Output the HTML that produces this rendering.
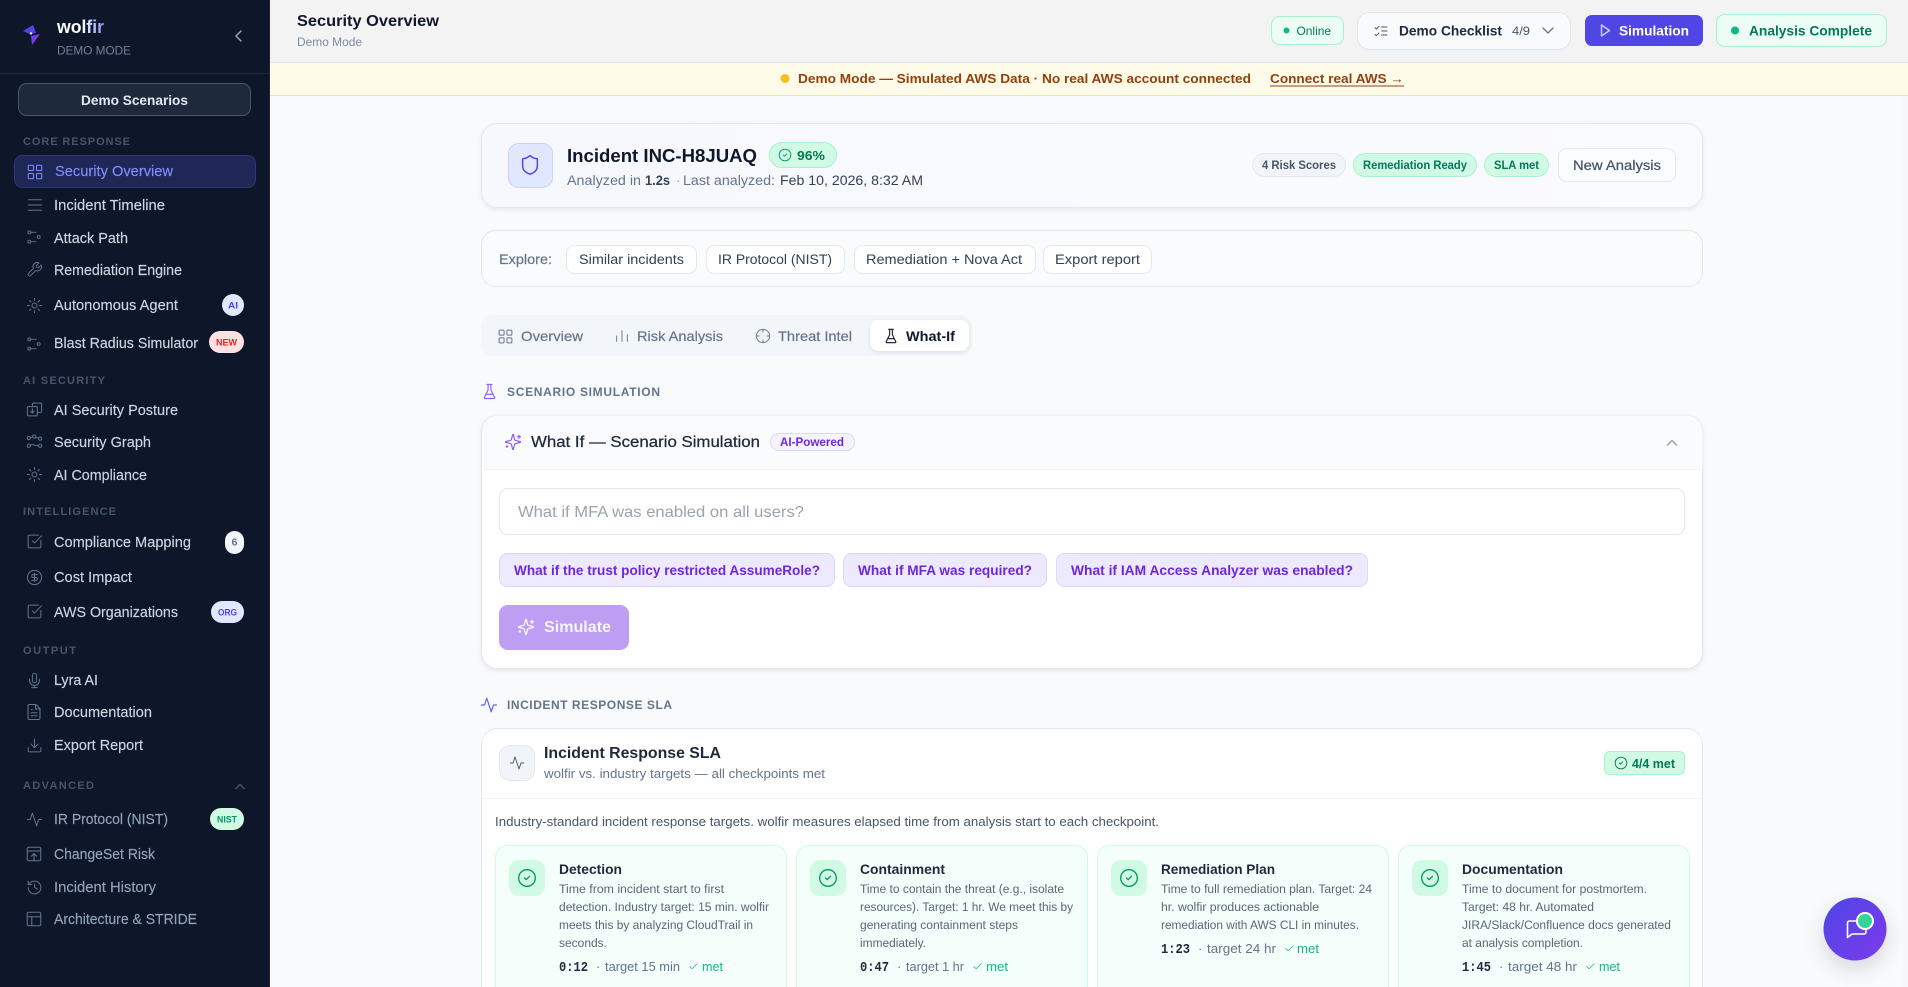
<!DOCTYPE html>
<html lang="en"><head><meta charset="utf-8"><title>wolfir - Security Overview</title>
<style>
html,body{margin:0;padding:0;width:1908px;height:987px;overflow:hidden;background:#f9fafc}
svg{display:block}
text{font-family:"Liberation Sans",Arial,sans-serif;white-space:pre}
.b{font-weight:700}
.n{font-size:14.5px;fill:#cbd5e1;stroke:#cbd5e1;stroke-width:.15px}
.d{font-size:14.5px;fill:#94a3b8;stroke:#94a3b8;stroke-width:.15px}
.s{font-size:11px;font-weight:700;fill:#475569}
.l{font-size:12px;font-weight:700;fill:#64748b}
.g{font-size:12.2px;fill:#5b6678}
.f{font-size:13px;fill:#64748b}
.m{font-family:"Liberation Mono",monospace;font-size:13.5px;font-weight:700;fill:#1e293b}
.ok{font-size:13px;fill:#10b981}
.t{font-size:14px;font-weight:700;fill:#1e293b}
.i{fill:none;stroke-width:1.6;stroke-linecap:round;stroke-linejoin:round}
.j{fill:none;stroke-width:1.4;stroke-linecap:round;stroke-linejoin:round}
</style></head><body>
<svg xmlns="http://www.w3.org/2000/svg" width="1908" height="987" viewBox="0 0 1908 987">
<defs>
<linearGradient id="wg" gradientUnits="userSpaceOnUse" x1="82" y1="0" x2="104" y2="0"><stop offset="0" stop-color="#fff"/><stop offset="1" stop-color="#818cf8"/></linearGradient>
<linearGradient id="fab" x1="0" y1="0" x2="1" y2="1"><stop offset="0" stop-color="#4f46e5"/><stop offset="1" stop-color="#7c3aed"/></linearGradient>
<linearGradient id="hc" x1="0" y1="0" x2="1" y2="0"><stop offset="0" stop-color="#f6f8fe"/><stop offset="1" stop-color="#fafbfe"/></linearGradient>
<filter id="sh" x="-5%" y="-20%" width="110%" height="150%"><feDropShadow dx="0" dy="1.5" stdDeviation="2.5" flood-color="#0f172a" flood-opacity=".08"/></filter>
<filter id="sh2" x="-40%" y="-40%" width="180%" height="190%"><feDropShadow dx="0" dy="8" stdDeviation="10" flood-color="#0f172a" flood-opacity=".14"/></filter>
<symbol id="grid" viewBox="0 0 24 24"><rect x="3" y="3" width="7" height="7" rx="1"/><rect x="14" y="3" width="7" height="7" rx="1"/><rect x="14" y="14" width="7" height="7" rx="1"/><rect x="3" y="14" width="7" height="7" rx="1"/></symbol>
<symbol id="lines" viewBox="0 0 24 24"><path d="M3 5h18M3 12h18M3 19h18"/></symbol>
<symbol id="path" viewBox="0 0 24 24"><circle cx="5" cy="5" r="2.2"/><circle cx="19" cy="12" r="2.2"/><circle cx="5" cy="19" r="2.2"/><path d="M7.5 5H15M7.5 19H15"/></symbol>
<symbol id="wrench" viewBox="0 0 24 24"><path d="M14.7 6.3a1 1 0 0 0 0 1.4l1.6 1.6a1 1 0 0 0 1.4 0l3.77-3.77a6 6 0 0 1-7.94 7.94l-6.91 6.91a2.12 2.12 0 0 1-3-3l6.91-6.91a6 6 0 0 1 7.94-7.94l-3.76 3.76z"/></symbol>
<symbol id="sun" viewBox="0 0 24 24"><circle cx="12" cy="12" r="3.5"/><path d="M12 2v3M12 19v3M4.9 4.9l2 2M17.1 17.1l2 2M2 12h3M19 12h3M4.9 19.1l2-2M17.1 6.9l2-2"/></symbol>
<symbol id="posture" viewBox="0 0 24 24"><rect x="2" y="8" width="14" height="13" rx="1.5"/><path d="M9 8V4a1 1 0 0 1 1-1h11a1 1 0 0 1 1 1v11a1 1 0 0 1-1 1h-5M9 11v6M6.5 14.5 9 17l2.5-2.5"/></symbol>
<symbol id="graph" viewBox="0 0 24 24"><circle cx="4" cy="7" r="2.3"/><circle cx="11.5" cy="5" r="2.3"/><circle cx="20" cy="8" r="2.3"/><circle cx="4" cy="18" r="2.3"/><circle cx="20" cy="18" r="2.3"/><path d="M6.3 6.5l3-1M13.7 6l4 1.3M6.3 17.5q3-2 6-.5t5.4.5"/></symbol>
<symbol id="check2" viewBox="0 0 24 24"><path d="M21 10.5V19a2 2 0 0 1-2 2H5a2 2 0 0 1-2-2V5a2 2 0 0 1 2-2h12.5"/><path d="m9 11 3 3L22 4"/></symbol>
<symbol id="dollar" viewBox="0 0 24 24"><circle cx="12" cy="12" r="10"/><path d="M16 8h-6a2 2 0 1 0 0 4h4a2 2 0 1 1 0 4H8M12 18V6"/></symbol>
<symbol id="mic" viewBox="0 0 24 24"><path d="M12 2a3 3 0 0 0-3 3v7a3 3 0 0 0 6 0V5a3 3 0 0 0-3-3Z"/><path d="M19 10v2a7 7 0 0 1-14 0v-2M12 19v3M8 22h8"/></symbol>
<symbol id="file" viewBox="0 0 24 24"><path d="M14.5 2H6a2 2 0 0 0-2 2v16a2 2 0 0 0 2 2h12a2 2 0 0 0 2-2V7.5L14.5 2z"/><path d="M14 2v6h6M16 13H8M16 17H8M10 9H8"/></symbol>
<symbol id="dl" viewBox="0 0 24 24"><path d="M21 15v4a2 2 0 0 1-2 2H5a2 2 0 0 1-2-2v-4M7 10l5 5 5-5M12 15V3"/></symbol>
<symbol id="act" viewBox="0 0 24 24"><path d="M22 12h-4l-3 9L9 3l-3 9H2"/></symbol>
<symbol id="cset" viewBox="0 0 24 24"><rect x="3" y="3" width="18" height="18" rx="2"/><path d="M3 8h18M12 21v-9M8.5 15l3.5-3.500 3.500 3.500"/></symbol>
<symbol id="hist" viewBox="0 0 24 24"><path d="M3 12a9 9 0 1 0 9-9 9.75 9.75 0 0 0-6.74 2.74L3 8M3 3v5h5M12 7v5l4 2"/></symbol>
<symbol id="layout" viewBox="0 0 24 24"><rect x="3" y="3" width="18" height="18" rx="2"/><path d="M3 9h18M9 21V9"/></symbol>
<symbol id="listc" viewBox="0 0 24 24"><path d="m3 17 2 2 4-4M3 7l2 2 4-4M13 6h8M13 12h8M13 18h8"/></symbol>
<symbol id="shield" viewBox="0 0 24 24"><path d="M20 13c0 5-3.500 7.500-7.660 8.950a1 1 0 0 1-.67-.01C7.500 20.500 4 18 4 13V6a1 1 0 0 1 1-1c2 0 4.500-1.200 6.240-2.720a1.170 1.170 0 0 1 1.520 0C14.510 3.810 17 5 19 5a1 1 0 0 1 1 1z"/></symbol>
<symbol id="cc" viewBox="0 0 24 24"><circle cx="12" cy="12" r="10"/><path d="m9 12 2 2 4-4"/></symbol>
<symbol id="bars" viewBox="0 0 24 24"><path d="M12 20V4M20 20V10M4 20v-8"/></symbol>
<symbol id="cross" viewBox="0 0 24 24"><circle cx="12" cy="12" r="10"/><path d="M22 12h-4M6 12H2M12 6V2M12 22v-4"/></symbol>
<symbol id="flask" viewBox="0 0 24 24"><path d="M10 2v7.527a2 2 0 0 1-.211.896L4.720 20.550a1 1 0 0 0 .9 1.450h12.760a1 1 0 0 0 .9-1.450l-5.069-10.127A2 2 0 0 1 14 9.527V2M8.500 2h7M7 16h10"/></symbol>
<symbol id="spark" viewBox="0 0 24 24"><path d="M9.937 15.500A2 2 0 0 0 8.500 14.063l-6.135-1.582a.5.5 0 0 1 0-.962L8.500 9.936A2 2 0 0 0 9.937 8.500l1.582-6.135a.5.5 0 0 1 .963 0L14.063 8.500A2 2 0 0 0 15.500 9.937l6.135 1.581a.5.5 0 0 1 0 .964L15.500 14.063a2 2 0 0 0-1.437 1.437l-1.582 6.135a.5.5 0 0 1-.963 0zM20 3v4M22 5h-4M4 17v2M5 18H3"/></symbol>
<symbol id="tick" viewBox="0 0 24 24"><path d="M20 6 9 17l-5-5"/></symbol>
</defs>

<rect width="1908" height="987" fill="#f9fafc"/>
<rect x="1903" y="96" width="5" height="891" fill="#f7f7f9"/>

<!-- Sidebar -->
<rect width="270" height="987" fill="#0e172a"/><rect x="269" width="1" height="987" fill="#1b2537"/>
<polygon points="23,31 33,25 36,33 30,34" fill="#4f46e5"/><polygon points="31,36 40,34 32,45" fill="#7c3aed"/><circle cx="31" cy="33.500" r="1.200" fill="#e2e8f0"/>
<text x="57" y="33" font-size="18.500" class="b" fill="url(#wg)" textLength="47" lengthAdjust="spacingAndGlyphs">wolfir</text>
<text x="57" y="54.500" font-size="11.500" fill="#718096" textLength="74" lengthAdjust="spacingAndGlyphs">DEMO MODE</text>
<path d="M241 31l-5 5 5 5" fill="none" stroke="#94a3b8" stroke-width="1.500" stroke-linecap="round" stroke-linejoin="round"/>
<rect y="73" width="269" height="1" fill="#1e293b"/>
<rect x="18.500" y="83.500" width="232" height="32" rx="8" fill="#1e293b" stroke="#475569"/>
<text x="81" y="105" font-size="14" class="b" fill="#e2e8f0" textLength="107" lengthAdjust="spacingAndGlyphs">Demo Scenarios</text>

<text x="23" y="145" class="s" textLength="107">CORE RESPONSE</text>
<rect x="14.500" y="155.500" width="241" height="32" rx="8" fill="#1f2757" stroke="#2e3674"/>
<use href="#grid" x="26" y="163" width="18" height="18" class="j" stroke="#818cf8"/>
<text x="55" y="176" class="n" style="fill:#818cf8;stroke:#818cf8" textLength="118" lengthAdjust="spacingAndGlyphs">Security Overview</text>
<use href="#lines" x="26" y="196" width="18" height="18" class="j" stroke="#64748b"/>
<text x="54" y="210" class="n" textLength="111" lengthAdjust="spacingAndGlyphs">Incident Timeline</text>
<use href="#path" x="26" y="229" width="16" height="16" class="j" stroke="#64748b"/>
<text x="54" y="243" class="n" textLength="74" lengthAdjust="spacingAndGlyphs">Attack Path</text>
<use href="#wrench" x="26" y="261" width="17" height="17" class="j" stroke="#64748b"/>
<text x="54" y="275" class="n" textLength="128" lengthAdjust="spacingAndGlyphs">Remediation Engine</text>
<use href="#sun" x="26" y="297" width="17" height="17" class="j" stroke="#64748b"/>
<text x="54" y="310" class="n" textLength="124" lengthAdjust="spacingAndGlyphs">Autonomous Agent</text>
<circle cx="233" cy="305" r="11" fill="#e0e7ff"/><text x="228" y="308.500" font-size="9.500" class="b" fill="#4f46e5" textLength="10" lengthAdjust="spacingAndGlyphs">AI</text>
<use href="#path" x="26" y="336" width="16" height="16" class="j" stroke="#64748b"/>
<text x="54" y="348" class="n" textLength="144" lengthAdjust="spacingAndGlyphs">Blast Radius Simulator</text>
<rect x="209" y="331" width="35" height="22" rx="11" fill="#fee2e2"/><text x="216" y="345.500" font-size="9.500" class="b" fill="#dc2626" textLength="21" lengthAdjust="spacingAndGlyphs">NEW</text>

<text x="23" y="384" class="s" textLength="82">AI SECURITY</text>
<use href="#posture" x="26" y="401" width="17" height="17" class="j" stroke="#64748b"/>
<text x="54" y="415" class="n" textLength="124" lengthAdjust="spacingAndGlyphs">AI Security Posture</text>
<use href="#graph" x="26" y="433" width="17" height="17" class="j" stroke="#64748b"/>
<text x="54" y="447" class="n" textLength="97" lengthAdjust="spacingAndGlyphs">Security Graph</text>
<use href="#sun" x="26" y="466" width="17" height="17" class="j" stroke="#64748b"/>
<text x="54" y="480" class="n" textLength="93" lengthAdjust="spacingAndGlyphs">AI Compliance</text>

<text x="23" y="515" class="s" textLength="93">INTELLIGENCE</text>
<use href="#check2" x="26" y="533" width="17" height="17" class="j" stroke="#64748b"/>
<text x="54" y="547" class="n" textLength="137" lengthAdjust="spacingAndGlyphs">Compliance Mapping</text>
<rect x="225" y="531" width="19" height="23" rx="9.500" fill="#f1f5f9"/><text x="231.500" y="545.500" font-size="10" class="b" fill="#64748b" textLength="6" lengthAdjust="spacingAndGlyphs">6</text>
<use href="#dollar" x="26" y="569" width="17" height="17" class="j" stroke="#64748b"/>
<text x="54" y="582" class="n" textLength="78" lengthAdjust="spacingAndGlyphs">Cost Impact</text>
<use href="#check2" x="26" y="603" width="17" height="17" class="j" stroke="#64748b"/>
<text x="54" y="617" class="n" textLength="124" lengthAdjust="spacingAndGlyphs">AWS Organizations</text>
<rect x="211" y="601" width="33" height="22" rx="11" fill="#e0e7ff"/><text x="218" y="615.500" font-size="9.500" class="b" fill="#4f46e5" textLength="19" lengthAdjust="spacingAndGlyphs">ORG</text>

<text x="23" y="654" class="s" textLength="53">OUTPUT</text>
<use href="#mic" x="26" y="672" width="17" height="17" class="j" stroke="#64748b"/>
<text x="54" y="685" class="n" textLength="44" lengthAdjust="spacingAndGlyphs">Lyra AI</text>
<use href="#file" x="25" y="703" width="18" height="18" class="j" stroke="#64748b"/>
<text x="54" y="717" class="n" textLength="98" lengthAdjust="spacingAndGlyphs">Documentation</text>
<use href="#dl" x="26" y="737" width="17" height="17" class="j" stroke="#64748b"/>
<text x="54" y="750" class="n" textLength="89" lengthAdjust="spacingAndGlyphs">Export Report</text>

<text x="23" y="789" class="s" textLength="71">ADVANCED</text>
<path d="M236 788.500l4-4 4 4" fill="none" stroke="#475569" stroke-width="1.500" stroke-linecap="round" stroke-linejoin="round"/>
<use href="#act" x="26" y="811" width="17" height="17" class="j" stroke="#64748b"/>
<text x="54" y="824" class="d" textLength="114" lengthAdjust="spacingAndGlyphs">IR Protocol (NIST)</text>
<rect x="210" y="808" width="34" height="22" rx="11" fill="#d1fae5"/><text x="217" y="822.500" font-size="9.500" class="b" fill="#059669" textLength="20" lengthAdjust="spacingAndGlyphs">NIST</text>
<use href="#cset" x="25" y="845" width="18" height="18" class="j" stroke="#64748b"/>
<text x="54" y="859" class="d" textLength="101" lengthAdjust="spacingAndGlyphs">ChangeSet Risk</text>
<use href="#hist" x="26" y="879" width="17" height="17" class="j" stroke="#64748b"/>
<text x="54" y="892" class="d" textLength="102" lengthAdjust="spacingAndGlyphs">Incident History</text>
<use href="#layout" x="25" y="910" width="18" height="18" class="j" stroke="#64748b"/>
<text x="54" y="924" class="d" textLength="143" lengthAdjust="spacingAndGlyphs">Architecture &amp; STRIDE</text>

<!-- Header -->
<rect x="270" width="1638" height="62" fill="#f3f3f4"/><rect x="270" y="62" width="1638" height="1" fill="#e2e8f0"/>
<text x="297" y="26" font-size="16" class="b" fill="#0f172a" textLength="142" lengthAdjust="spacingAndGlyphs">Security Overview</text>
<text x="297" y="46" font-size="11.500" fill="#7c8aa0" textLength="65" lengthAdjust="spacingAndGlyphs">Demo Mode</text>

<rect x="1271.500" y="16.500" width="72" height="28" rx="8" fill="#ecfdf5" stroke="#a7f3d0"/>
<circle cx="1286.500" cy="30.500" r="3" fill="#10b981"/>
<text x="1296.500" y="35" font-size="12" fill="#047857" textLength="34.500" lengthAdjust="spacingAndGlyphs">Online</text>
<rect x="1357.500" y="12.500" width="213" height="37" rx="12" fill="#f8fafc" stroke="#e2e8f0"/>
<use href="#listc" x="1373" y="23" width="16" height="16" class="j" stroke="#475569"/>
<text x="1399" y="35.500" font-size="13.500" class="b" fill="#1e293b" textLength="103" lengthAdjust="spacingAndGlyphs">Demo Checklist</text>
<text x="1512" y="35" font-size="12" fill="#475569" textLength="18" lengthAdjust="spacingAndGlyphs">4/9</text>
<path d="M1543 28l5 5 5-5" fill="none" stroke="#64748b" stroke-width="1.300" stroke-linecap="round" stroke-linejoin="round"/>
<rect x="1585" y="15" width="118" height="31" rx="7" fill="#4f46e5"/>
<path d="M1601.500 25l8 5.500-8 5.500z" fill="none" stroke="#c7d2fe" stroke-width="1.400" stroke-linejoin="round"/>
<text x="1619" y="35.500" font-size="13.500" class="b" fill="#fff" textLength="70" lengthAdjust="spacingAndGlyphs">Simulation</text>
<rect x="1716.500" y="14.500" width="170" height="32" rx="8" fill="#ecfdf5" stroke="#a7f3d0"/>
<circle cx="1735" cy="30.500" r="4" fill="#10b981"/>
<text x="1749" y="35.500" font-size="13.500" class="b" fill="#047857" textLength="123" lengthAdjust="spacingAndGlyphs">Analysis Complete</text>

<!-- Banner -->
<rect x="270" y="63" width="1638" height="33" fill="#fffbe9"/><rect x="270" y="95" width="1638" height="1" fill="#fde68a"/>
<circle cx="785" cy="78.500" r="4.500" fill="#fbbf24"/>
<text x="798" y="83" font-size="13" class="b" fill="#92400e" textLength="453" lengthAdjust="spacingAndGlyphs">Demo Mode — Simulated AWS Data · No real AWS account connected</text>
<text x="1270" y="83" font-size="13" class="b" fill="#92400e" textLength="134" lengthAdjust="spacingAndGlyphs">Connect real AWS →</text>
<rect x="1270" y="85.500" width="134" height="1" fill="#92400e"/>

<!-- Incident card -->
<rect x="481.500" y="123.500" width="1221" height="84" rx="16" fill="url(#hc)" stroke="#e2e8f0" filter="url(#sh)"/>
<rect x="508.500" y="143.500" width="44" height="44" rx="10" fill="#e0e7ff" stroke="#c7d2fe"/>
<use href="#shield" x="519" y="154" width="22" height="22" class="i" stroke="#4f46e5"/>
<text x="567" y="162" font-size="18" class="b" fill="#0f172a" textLength="190" lengthAdjust="spacingAndGlyphs">Incident INC-H8JUAQ</text>
<rect x="769.500" y="142.500" width="67" height="25" rx="12.500" fill="#d1fae5" stroke="#a7f3d0"/>
<use href="#cc" x="778" y="148" width="14" height="14" class="i" stroke="#059669"/>
<text x="797" y="160" font-size="13" class="b" fill="#047857" textLength="28" lengthAdjust="spacingAndGlyphs">96%</text>
<text x="567" y="185" font-size="13.500" fill="#64748b" textLength="74" lengthAdjust="spacingAndGlyphs">Analyzed in</text>
<text x="645" y="185" font-size="13.500" class="b" fill="#334155" textLength="25" lengthAdjust="spacingAndGlyphs">1.2s</text>
<text x="676" y="185" font-size="13.500" fill="#94a3b8">·</text>
<text x="683" y="185" font-size="13.500" fill="#64748b" textLength="92" lengthAdjust="spacingAndGlyphs">Last analyzed:</text>
<text x="780" y="185" font-size="13.500" fill="#334155" textLength="143" lengthAdjust="spacingAndGlyphs">Feb 10, 2026, 8:32 AM</text>

<rect x="1252.500" y="153.500" width="93" height="23" rx="11.500" fill="#f1f5f9" stroke="#e2e8f0"/>
<text x="1262" y="169" font-size="11.500" fill="#475569" class="b" textLength="74" lengthAdjust="spacingAndGlyphs">4 Risk Scores</text>
<rect x="1353.500" y="153.500" width="123" height="23" rx="11.500" fill="#d1fae5" stroke="#a7f3d0"/>
<text x="1363" y="169" font-size="11.500" fill="#047857" class="b" textLength="104" lengthAdjust="spacingAndGlyphs">Remediation Ready</text>
<rect x="1484.500" y="153.500" width="64" height="23" rx="11.500" fill="#d1fae5" stroke="#a7f3d0"/>
<text x="1494" y="169" font-size="11.500" fill="#047857" class="b" textLength="45" lengthAdjust="spacingAndGlyphs">SLA met</text>
<rect x="1558.500" y="148.500" width="117" height="33" rx="8" fill="#fbfcfe" stroke="#e2e8f0"/>
<text x="1573" y="170" font-size="14" fill="#475569" textLength="88" lengthAdjust="spacingAndGlyphs" style="stroke:#475569;stroke-width:.25px">New Analysis</text>

<!-- Explore -->
<rect x="481.500" y="230.500" width="1221" height="56" rx="14" fill="#fafbfd" stroke="#e2e8f0"/>
<text x="499" y="264" font-size="13.500" fill="#64748b" textLength="53" lengthAdjust="spacingAndGlyphs" style="stroke:#64748b;stroke-width:.2px">Explore:</text>
<rect x="566.500" y="245.500" width="130" height="28" rx="8" fill="#fff" stroke="#e2e8f0"/>
<text x="579" y="264" font-size="13.500" fill="#334155" textLength="105" lengthAdjust="spacingAndGlyphs">Similar incidents</text>
<rect x="706.500" y="245.500" width="138" height="28" rx="8" fill="#fff" stroke="#e2e8f0"/>
<text x="718" y="264" font-size="13.500" fill="#334155" textLength="114" lengthAdjust="spacingAndGlyphs">IR Protocol (NIST)</text>
<rect x="854.500" y="245.500" width="181" height="28" rx="8" fill="#fff" stroke="#e2e8f0"/>
<text x="866" y="264" font-size="13.500" fill="#334155" textLength="156" lengthAdjust="spacingAndGlyphs">Remediation + Nova Act</text>
<rect x="1043.500" y="245.500" width="108" height="28" rx="8" fill="#fff" stroke="#e2e8f0"/>
<text x="1055" y="264" font-size="13.500" fill="#334155" textLength="85" lengthAdjust="spacingAndGlyphs">Export report</text>

<!-- Tabs -->
<rect x="481" y="315" width="491" height="41" rx="12" fill="#f2f5f9"/>
<rect x="870" y="320" width="99" height="31" rx="9" fill="#fff" filter="url(#sh)"/>
<use href="#grid" x="497" y="328" width="17" height="17" class="j" stroke="#64748b"/>
<text x="521" y="341" font-size="14" fill="#64748b" textLength="62" lengthAdjust="spacingAndGlyphs" style="stroke:#64748b;stroke-width:.2px">Overview</text>
<use href="#bars" x="614" y="328" width="16" height="16" class="j" stroke="#64748b"/>
<text x="637" y="341" font-size="14" fill="#64748b" textLength="86" lengthAdjust="spacingAndGlyphs" style="stroke:#64748b;stroke-width:.2px">Risk Analysis</text>
<use href="#cross" x="755" y="328" width="16" height="16" class="j" stroke="#64748b"/>
<text x="778" y="341" font-size="14" fill="#64748b" textLength="74" lengthAdjust="spacingAndGlyphs" style="stroke:#64748b;stroke-width:.2px">Threat Intel</text>
<use href="#flask" x="883" y="328" width="16" height="16" class="i" stroke="#0f172a"/>
<text x="906" y="341" font-size="14" class="b" fill="#0f172a" textLength="49" lengthAdjust="spacingAndGlyphs">What-If</text>

<use href="#flask" x="481" y="383" width="17" height="17" class="i" stroke="#8b5cf6"/>
<text x="507" y="396" class="l" textLength="153">SCENARIO SIMULATION</text>

<!-- What if -->
<rect x="481.500" y="415.500" width="1221" height="253" rx="16" fill="#fff" stroke="#e2e8f0" filter="url(#sh)"/>
<path d="M482 469V431.500a16 16 0 0 1 16-16H1686.500a16 16 0 0 1 16 16V469z" fill="#fafbfd"/>
<rect x="482" y="469" width="1220" height="1" fill="#f1f5f9"/>
<use href="#spark" x="504" y="433" width="18" height="18" class="i" stroke="#8b5cf6"/>
<text x="531" y="447" font-size="15.500" fill="#1e293b" textLength="229" lengthAdjust="spacingAndGlyphs" style="stroke:#1e293b;stroke-width:.25px">What If — Scenario Simulation</text>
<rect x="770.500" y="433.500" width="84" height="17" rx="8.500" fill="#f5f3ff" stroke="#ddd6fe"/>
<text x="780" y="446" font-size="11.500" class="b" fill="#6d28d9" textLength="64" lengthAdjust="spacingAndGlyphs">AI-Powered</text>
<path d="M1667.500 445l4.500-4.500 4.500 4.500" fill="none" stroke="#94a3b8" stroke-width="1.500" stroke-linecap="round" stroke-linejoin="round"/>
<rect x="499.500" y="488.500" width="1185" height="46" rx="8" fill="#fff" stroke="#e2e8f0"/>
<text x="518" y="517" font-size="16" fill="#9ca3af" textLength="286" lengthAdjust="spacingAndGlyphs">What if MFA was enabled on all users?</text>
<rect x="499.500" y="553.500" width="335" height="33" rx="8" fill="#ede9fe" stroke="#ddd6fe"/>
<text x="514" y="575" font-size="13.500" class="b" fill="#6d28d9" textLength="306" lengthAdjust="spacingAndGlyphs">What if the trust policy restricted AssumeRole?</text>
<rect x="843.500" y="553.500" width="203" height="33" rx="8" fill="#ede9fe" stroke="#ddd6fe"/>
<text x="858" y="575" font-size="13.500" class="b" fill="#6d28d9" textLength="174" lengthAdjust="spacingAndGlyphs">What if MFA was required?</text>
<rect x="1056.500" y="553.500" width="311" height="33" rx="8" fill="#ede9fe" stroke="#ddd6fe"/>
<text x="1071" y="575" font-size="13.500" class="b" fill="#6d28d9" textLength="282" lengthAdjust="spacingAndGlyphs">What if IAM Access Analyzer was enabled?</text>
<rect x="499" y="605" width="130" height="45" rx="9" fill="#bd9ef3"/>
<use href="#spark" x="517" y="618" width="18" height="18" class="i" stroke="#fff"/>
<text x="544" y="632" font-size="16" class="b" fill="#f8f5ff" textLength="67" lengthAdjust="spacingAndGlyphs">Simulate</text>

<!-- SLA -->
<use href="#act" x="480" y="696" width="18" height="18" class="i" stroke="#6366f1"/>
<text x="507" y="709" class="l" textLength="165">INCIDENT RESPONSE SLA</text>
<rect x="481.500" y="728.500" width="1221" height="300" rx="16" fill="#fff" stroke="#e2e8f0"/>
<rect x="499.500" y="745.500" width="35" height="35" rx="10" fill="#f1f5f9" stroke="#e2e8f0"/>
<use href="#act" x="509" y="755" width="16" height="16" class="j" stroke="#475569"/>
<text x="544" y="758" font-size="16" class="b" fill="#1e293b" textLength="177" lengthAdjust="spacingAndGlyphs">Incident Response SLA</text>
<text x="544" y="778" font-size="12.500" fill="#64748b" textLength="281" lengthAdjust="spacingAndGlyphs">wolfir vs. industry targets — all checkpoints met</text>
<rect x="1604.500" y="751.500" width="80" height="23" rx="5" fill="#d1fae5" stroke="#a7f3d0"/>
<use href="#cc" x="1614" y="756" width="14" height="14" class="i" stroke="#047857"/>
<text x="1632" y="768" font-size="12.500" class="b" fill="#047857" textLength="43" lengthAdjust="spacingAndGlyphs">4/4 met</text>
<rect x="482" y="798" width="1220" height="1" fill="#f1f5f9"/>
<text x="495" y="826" font-size="13" fill="#475569" textLength="664" lengthAdjust="spacingAndGlyphs">Industry-standard incident response targets. wolfir measures elapsed time from analysis start to each checkpoint.</text>

<!-- card 1 -->
<rect x="495.500" y="845.500" width="291" height="180" rx="12" fill="#f4fefa" stroke="#d1fae5"/>
<rect x="509" y="860" width="36" height="36" rx="10" fill="#d1fae5"/>
<use href="#cc" x="517" y="868" width="20" height="20" class="i" stroke="#059669"/>
<text x="559" y="874" class="t" textLength="63" lengthAdjust="spacingAndGlyphs">Detection</text>
<text x="559" y="893" class="g" textLength="165" lengthAdjust="spacingAndGlyphs">Time from incident start to first</text>
<text x="559" y="911" class="g" textLength="210" lengthAdjust="spacingAndGlyphs">detection. Industry target: 15 min. wolfir</text>
<text x="559" y="929" class="g" textLength="194" lengthAdjust="spacingAndGlyphs">meets this by analyzing CloudTrail in</text>
<text x="559" y="947" class="g" textLength="48" lengthAdjust="spacingAndGlyphs">seconds.</text>
<text x="559" y="971" class="m" textLength="29" lengthAdjust="spacingAndGlyphs">0:12</text><text x="596" y="971" class="f">·</text>
<text x="605" y="971" class="f" textLength="75" lengthAdjust="spacingAndGlyphs">target 15 min</text>
<use href="#tick" x="688" y="961" width="11" height="11" class="i" stroke="#10b981"/>
<text x="702" y="971" class="ok" textLength="21" lengthAdjust="spacingAndGlyphs">met</text>

<!-- card 2 -->
<rect x="796.500" y="845.500" width="291" height="180" rx="12" fill="#f4fefa" stroke="#d1fae5"/>
<rect x="810" y="860" width="36" height="36" rx="10" fill="#d1fae5"/>
<use href="#cc" x="818" y="868" width="20" height="20" class="i" stroke="#059669"/>
<text x="860" y="874" class="t" textLength="85" lengthAdjust="spacingAndGlyphs">Containment</text>
<text x="860" y="893" class="g" textLength="204" lengthAdjust="spacingAndGlyphs">Time to contain the threat (e.g., isolate</text>
<text x="860" y="911" class="g" textLength="213" lengthAdjust="spacingAndGlyphs">resources). Target: 1 hr. We meet this by</text>
<text x="860" y="929" class="g" textLength="158" lengthAdjust="spacingAndGlyphs">generating containment steps</text>
<text x="860" y="947" class="g" textLength="66" lengthAdjust="spacingAndGlyphs">immediately.</text>
<text x="860" y="971" class="m" textLength="29" lengthAdjust="spacingAndGlyphs">0:47</text><text x="897" y="971" class="f">·</text>
<text x="906" y="971" class="f" textLength="58" lengthAdjust="spacingAndGlyphs">target 1 hr</text>
<use href="#tick" x="972" y="961" width="11" height="11" class="i" stroke="#10b981"/>
<text x="986" y="971" class="ok" textLength="22" lengthAdjust="spacingAndGlyphs">met</text>

<!-- card 3 -->
<rect x="1097.500" y="845.500" width="291" height="180" rx="12" fill="#f4fefa" stroke="#d1fae5"/>
<rect x="1111" y="860" width="36" height="36" rx="10" fill="#d1fae5"/>
<use href="#cc" x="1119" y="868" width="20" height="20" class="i" stroke="#059669"/>
<text x="1161" y="874" class="t" textLength="114" lengthAdjust="spacingAndGlyphs">Remediation Plan</text>
<text x="1161" y="893" class="g" textLength="211" lengthAdjust="spacingAndGlyphs">Time to full remediation plan. Target: 24</text>
<text x="1161" y="911" class="g" textLength="158" lengthAdjust="spacingAndGlyphs">hr. wolfir produces actionable</text>
<text x="1161" y="929" class="g" textLength="198" lengthAdjust="spacingAndGlyphs">remediation with AWS CLI in minutes.</text>
<text x="1161" y="953" class="m" textLength="29" lengthAdjust="spacingAndGlyphs">1:23</text><text x="1198" y="953" class="f">·</text>
<text x="1207" y="953" class="f" textLength="69" lengthAdjust="spacingAndGlyphs">target 24 hr</text>
<use href="#tick" x="1284" y="943" width="11" height="11" class="i" stroke="#10b981"/>
<text x="1297" y="953" class="ok" textLength="22" lengthAdjust="spacingAndGlyphs">met</text>

<!-- card 4 -->
<rect x="1398.500" y="845.500" width="291" height="180" rx="12" fill="#f4fefa" stroke="#d1fae5"/>
<rect x="1412" y="860" width="36" height="36" rx="10" fill="#d1fae5"/>
<use href="#cc" x="1420" y="868" width="20" height="20" class="i" stroke="#059669"/>
<text x="1462" y="874" class="t" textLength="101" lengthAdjust="spacingAndGlyphs">Documentation</text>
<text x="1462" y="893" class="g" textLength="185" lengthAdjust="spacingAndGlyphs">Time to document for postmortem.</text>
<text x="1462" y="911" class="g" textLength="132" lengthAdjust="spacingAndGlyphs">Target: 48 hr. Automated</text>
<text x="1462" y="929" class="g" textLength="209" lengthAdjust="spacingAndGlyphs">JIRA/Slack/Confluence docs generated</text>
<text x="1462" y="947" class="g" textLength="121" lengthAdjust="spacingAndGlyphs">at analysis completion.</text>
<text x="1462" y="971" class="m" textLength="29" lengthAdjust="spacingAndGlyphs">1:45</text><text x="1499" y="971" class="f">·</text>
<text x="1508" y="971" class="f" textLength="69" lengthAdjust="spacingAndGlyphs">target 48 hr</text>
<use href="#tick" x="1585" y="961" width="11" height="11" class="i" stroke="#10b981"/>
<text x="1599" y="971" class="ok" textLength="21" lengthAdjust="spacingAndGlyphs">met</text>

<!-- FAB -->
<circle cx="1855" cy="929" r="31.500" fill="url(#fab)" filter="url(#sh2)"/>
<path d="M1866 932a2 2 0 0 1-2 2h-12l-4.500 3.500V923a2 2 0 0 1 2-2h14a2 2 0 0 1 2 2z" fill="none" stroke="#fff" stroke-width="1.600" stroke-linejoin="round"/>
<circle cx="1865" cy="921" r="9" fill="#fff"/><circle cx="1865" cy="921" r="7" fill="#34d399"/>
</svg>
</body></html>
